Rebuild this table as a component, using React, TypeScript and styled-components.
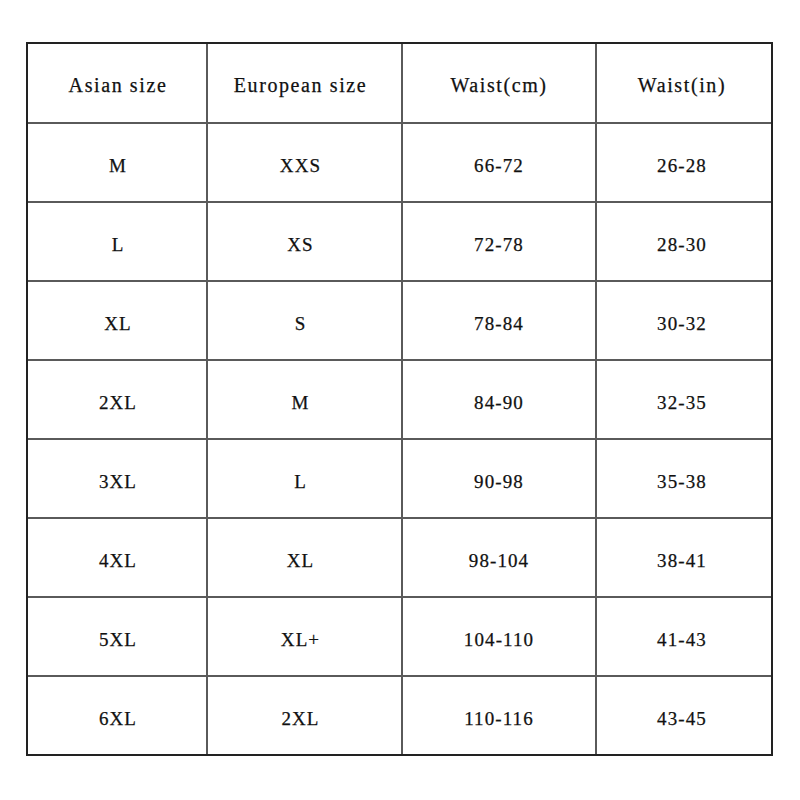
import React from "react";
import styled, { createGlobalStyle } from "styled-components";

const GlobalStyle = createGlobalStyle`
  html, body {
    margin: 0;
    padding: 0;
    background: #ffffff;
  }
`;

const Page = styled.div`
  width: 800px;
  height: 800px;
  padding: 42px 0 0 26px;
  box-sizing: border-box;
  background: #ffffff;
`;

const Table = styled.div`
  display: grid;
  grid-template-columns: 178px 193px 192px 174px;
  grid-template-rows: 78px repeat(8, 77px);
  gap: 2px;
  width: max-content;
  border: 2px solid #222222;
  background: #5a5a5a;
`;

// $shift nudges the text off the column centre (negative = left)
const Cell = styled.div<{ $head?: boolean; $shift: number }>`
  display: flex;
  align-items: center;
  justify-content: center;
  padding-top: ${(p) => (p.$head ? "5px" : "7px")};
  padding-left: ${(p) => (p.$shift > 0 ? p.$shift * 2 : 0)}px;
  padding-right: ${(p) => (p.$shift < 0 ? -p.$shift * 2 : 0)}px;
  box-sizing: border-box;
  background: #ffffff;
  color: #111111;
  font-family: "Liberation Serif", "DejaVu Serif", serif;
  font-size: ${(p) => (p.$head ? "20px" : "19px")};
  letter-spacing: ${(p) => (p.$head ? "1.6px" : "1.1px")};
  -webkit-text-stroke: 0.25px #111111;
`;

const shifts = [1, -4, 0, -2];

const headers = ["Asian size", "European size", "Waist(cm)", "Waist(in)"];

const rows = [
  ["M", "XXS", "66-72", "26-28"],
  ["L", "XS", "72-78", "28-30"],
  ["XL", "S", "78-84", "30-32"],
  ["2XL", "M", "84-90", "32-35"],
  ["3XL", "L", "90-98", "35-38"],
  ["4XL", "XL", "98-104", "38-41"],
  ["5XL", "XL+", "104-110", "41-43"],
  ["6XL", "2XL", "110-116", "43-45"],
];

export default function App() {
  return (
    <Page>
      <GlobalStyle />
      <Table>
        {headers.map((h, j) => (
          <Cell key={h} $head $shift={shifts[j]}>
            {h}
          </Cell>
        ))}
        {rows.map((r, i) =>
          r.map((v, j) => (
            <Cell key={i + "-" + j} $shift={shifts[j]}>
              {v}
            </Cell>
          ))
        )}
      </Table>
    </Page>
  );
}
